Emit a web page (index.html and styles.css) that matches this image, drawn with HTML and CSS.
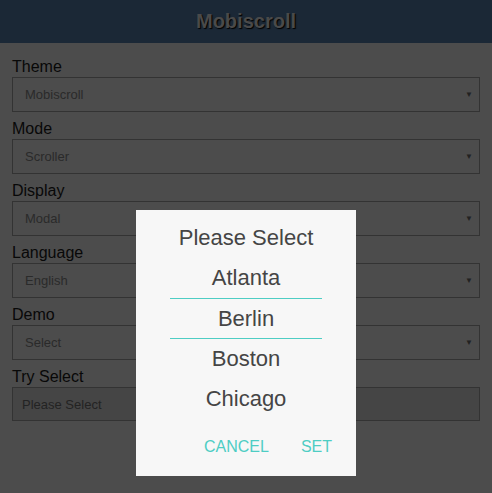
FILE: index.html
```html
<!DOCTYPE html>
<html lang="en">
<head>
    <meta charset="UTF-8">
    <meta name="viewport" content="width=device-width, initial-scale=1.0">
    <title>Mobiscroll</title>
    <link rel="stylesheet" href="styles.css">
</head>
<body>
    <div class="header">Mobiscroll</div>
    <div class="content">
        <div class="field">
            <label>Theme</label>
            <div class="select">Mobiscroll<span class="arrow">▼</span></div>
        </div>
        <div class="field">
            <label>Mode</label>
            <div class="select">Scroller<span class="arrow">▼</span></div>
        </div>
        <div class="field">
            <label>Display</label>
            <div class="select">Modal<span class="arrow">▼</span></div>
        </div>
        <div class="field">
            <label>Language</label>
            <div class="select">English<span class="arrow">▼</span></div>
        </div>
        <div class="field">
            <label>Demo</label>
            <div class="select">Select<span class="arrow">▼</span></div>
        </div>
        <div class="field">
            <label>Try Select</label>
            <div class="input">Please Select</div>
        </div>
    </div>

    <!-- 弹出的选择器 -->
    <div class="overlay">
        <div class="picker">
            <div class="picker-row">Please Select</div>
            <div class="picker-row">Atlanta</div>
            <div class="picker-row selected">Berlin</div>
            <div class="picker-row">Boston</div>
            <div class="picker-row">Chicago</div>
            <div class="picker-buttons">
                <span class="btn">CANCEL</span>
                <span class="btn">SET</span>
            </div>
        </div>
    </div>
</body>
</html>
```

FILE: styles.css
```css
body {
    margin: 0;
    background: #4c4c4c;
    font-family: 'Liberation Sans', Arial, sans-serif;
    height: 493px;
    overflow: hidden;
}

.header {
    height: 43px;
    line-height: 43px;
    background: #1b2836;
    color: #4a4a4a;
    text-align: center;
    font-size: 20px;
    font-weight: bold;
    text-shadow: 1px 1px 1px #000;
}

.content {
    padding: 14px 12px 0;
}

.field {
    margin-bottom: 7px;
}

.field label {
    display: block;
    height: 20px;
    line-height: 20px;
    font-size: 16px;
    color: #080808;
}

.select, .input {
    display: flex;
    align-items: center;
    justify-content: space-between;
    height: 35px;
    box-sizing: border-box;
    border: 1px solid #333;
    padding: 0 6px 0 12px;
    font-size: 13px;
    color: #2a2a2a;
}

.input {
    height: 34px;
    padding-left: 9px;
    background: #454545;
    color: #232323;
}

.arrow {
    font-size: 8px;
    color: #222;
}

.overlay {
    position: fixed;
    top: 0;
    left: 0;
    right: 0;
    bottom: 0;
    display: flex;
    justify-content: center;
    align-items: flex-start;
    padding-top: 210px;
}

.picker {
    width: 220px;
    height: 266px;
    box-sizing: border-box;
    padding-top: 8px;
    background: #f7f7f7;
}

.picker-row {
    height: 40px;
    line-height: 40px;
    text-align: center;
    font-size: 22px;
    color: #454545;
}

.picker-row.selected {
    height: 39px;
    line-height: 39px;
    margin: 0 34px;
    border-top: 1px solid #4ecdc4;
    border-bottom: 1px solid #4ecdc4;
}

.picker-buttons {
    display: flex;
    justify-content: flex-end;
    padding: 8px 8px 0 0;
    height: 40px;
    align-items: center;
}

.btn {
    padding: 0 16px;
    font-size: 16px;
    color: #4ecdc4;
    cursor: pointer;
}
```
